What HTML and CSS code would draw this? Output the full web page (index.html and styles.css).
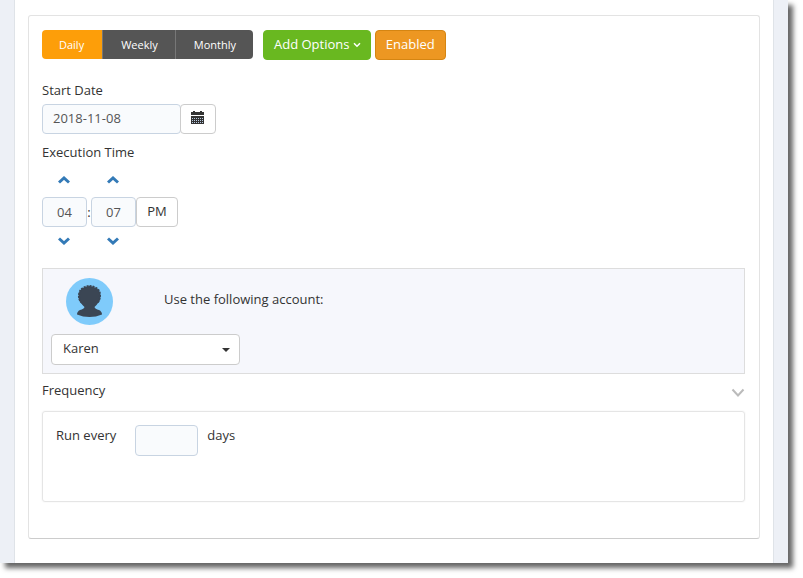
FILE: index.html
```html
<!DOCTYPE html>
<html lang="en">
<head>
    <meta charset="UTF-8">
    <meta name="viewport" content="width=device-width, initial-scale=1.0">
    <title>Schedule</title>
    <link rel="stylesheet" href="styles.css">
</head>
<body>

    <div class="window">
        <div class="page">
            <form class="card">
                <div class="toolbar">
                    <div class="btn-group">
                        <button type="button" class="active">Daily</button>
                        <button type="button">Weekly</button>
                        <button type="button">Monthly</button>
                    </div>
                    <button type="button" class="btn btn-green">Add Options
                        <svg width="8" height="6" viewBox="0 0 8 6"><path d="M1 1.2L4 4.2L7 1.2" fill="none" stroke="#fff" stroke-width="1.5"/></svg>
                    </button>
                    <button type="button" class="btn btn-orange">Enabled</button>
                </div>

                <label class="title" for="startDate">Start Date</label>
                <div class="date-row">
                    <input type="text" id="startDate" class="field date" value="2018-11-08">
                    <button type="button" class="btn btn-white calendar" aria-label="Open calendar">
                        <svg width="13" height="13" viewBox="0 0 13 13">
                            <path d="M0 1h2V0h2v1h5V0h2v1h2v3H0zM0 5h13v8H0z" fill="#333"/>
                            <path d="M1 7.500h11M1 9.500h11M1 11.500h11" stroke="#b9cbe0" stroke-dasharray="1 1"/>
                        </svg>
                    </button>
                </div>

                <label class="title" for="hours">Execution Time</label>
                <div class="time">
                    <button type="button" class="step" aria-label="Hour up"><svg width="12" height="8" viewBox="0 0 12 8"><path d="M1 6.5L6 2L11 6.5"/></svg></button>
                    <span></span>
                    <button type="button" class="step" aria-label="Minute up"><svg width="12" height="8" viewBox="0 0 12 8"><path d="M1 6.5L6 2L11 6.5"/></svg></button>
                    <span></span>
                    <input type="text" id="hours" class="field" value="04">
                    <span class="colon">:</span>
                    <input type="text" class="field" value="07" aria-label="Minutes">
                    <button type="button" class="btn btn-white">PM</button>
                    <button type="button" class="step" aria-label="Hour down"><svg width="12" height="8" viewBox="0 0 12 8"><path d="M1 1.5L6 6L11 1.5"/></svg></button>
                    <span></span>
                    <button type="button" class="step" aria-label="Minute down"><svg width="12" height="8" viewBox="0 0 12 8"><path d="M1 1.5L6 6L11 1.5"/></svg></button>
                    <span></span>
                </div>

                <div class="account">
                    <div class="account-head">
                        <svg width="47" height="47" viewBox="0 0 47 47">
                            <circle cx="23.5" cy="23.5" r="23.5" fill="#7fcbfb"/>
                            <path d="M18 9.500Q23.500 6.500 29 9.500Q34.500 11.500 34.500 18Q34.500 23 32 25Q30.500 27.500 28.500 29Q29 31 33 32Q36 33.500 36 36.500Q30 39 23.500 39T11 36.500Q11 33.500 14 32Q18 31 18.500 29Q16.500 27.500 15 25Q12.500 23 12.500 18Q12.500 11.500 18 9.500Z" fill="#3b4654"/>
                            <path d="M16 25Q12.500 22 13 16.500Q14 11 18 9.500Q23.500 6.500 29 9.500Q34 11.500 34 17Q34 22 31 25" fill="none" stroke="#3b4654" stroke-width="2" stroke-dasharray="2 1"/>
                        </svg>
                        <label for="account">Use the following account:</label>
                    </div>
                    <div class="select">
                        <select id="account">
                            <option>Karen</option>
                        </select>
                    </div>
                </div>

                <div class="frequency-head">
                    <span>Frequency</span>
                    <button type="button" class="toggle" aria-label="Toggle frequency"><svg width="14" height="10" viewBox="0 0 14 10"><path d="M1.500 1.500L7 7.500L12.500 1.500"/></svg></button>
                </div>
                <div class="frequency">
                    <label for="days">Run every</label>
                    <input type="text" id="days" class="field">
                    <span>days</span>
                </div>
            </form>
        </div>
    </div>

</body>
</html>
```
FILE: styles.css
```css
* {
    box-sizing: border-box;
}
body {
    margin: 0;
    padding: 0 15px 15px 0;
    background-color: white;
    font-family: "Open Sans", Arial, sans-serif;
    font-size: 13px;
    line-height: 20px;
    color: #333;
}
button, input, select {
    font-family: inherit;
    font-size: 13px;
    line-height: 20px;
    color: inherit;
    margin: 0;
}
button {
    cursor: pointer;
}
.window {
    padding: 0 14px;
    background-color: #edf0f6;
    box-shadow: 5px 5px 5px #666;
}
.page {
    padding: 15px 13px 24px;
    background-color: white;
    border-left: 1px solid #dfe3e8;
    border-right: 1px solid #dfe3e8;
}
.card {
    padding: 14px 14px 36px 13px;
    border: 1px solid #e3e3e3;
    border-bottom-color: #ccc;
    border-radius: 3px;
}
.toolbar {
    display: flex;
    align-items: flex-start;
    gap: 4px;
    margin-bottom: 20px;
}
.btn-group {
    display: flex;
    margin-right: 6px;
    border-radius: 4px;
    overflow: hidden;
}
.btn-group button {
    height: 29px;
    padding: 0 17px 0 18px;
    border: none;
    border-left: 1px solid #777;
    background-color: #555;
    color: white;
    font-size: 11px;
}
.btn-group .active {
    padding: 0 18px 0 17px;
    border-left: none;
    background-color: #fd9e09;
}
.btn {
    height: 30px;
    padding: 0 10px 2px;
    border: 1px solid;
    border-radius: 4px;
}
.btn-green {
    padding: 0 9px 2px 10px;
    background-color: #69b820;
    border-color: #69b820;
    color: white;
}
.btn-green svg {
    vertical-align: 1px;
}
.btn-orange {
    background-color: #ed9722;
    border-color: #d58512;
    color: white;
}
.btn-white {
    background-color: white;
    border-color: #ccc;
}
.title {
    display: block;
    margin-bottom: 4px;
}
.field {
    height: 30px;
    padding: 0 10px;
    border: 1px solid #c8d4e2;
    border-radius: 4px;
    background-color: #f9fbfd;
    color: #555;
}
.date-row {
    display: flex;
    margin-bottom: 8px;
}
.date {
    width: 139px;
    padding-bottom: 2px;
}
.calendar {
    width: 36px;
    padding: 0 2px 2px 0;
    margin-left: -1px;
}
.calendar svg {
    vertical-align: -1px;
}
.time {
    display: grid;
    grid-template-columns: 45px 4px 45px 42px;
    grid-template-rows: 31px 30px 28px;
    margin-bottom: 13px;
}
.time .field {
    width: 45px;
    text-align: center;
}
.time .btn {
    padding: 0 0 2px;
}
.colon {
    padding-top: 5px;
    text-align: center;
}
.step {
    height: 28px;
    padding: 0 1px 0 0;
    border: none;
    background: none;
}
.step svg {
    display: block;
    margin: 0 auto;
}
.step path {
    fill: none;
    stroke: #337ab7;
    stroke-width: 3;
}
.account {
    padding: 9px 8px 8px;
    border: 1px solid #ddd;
    background-color: #f6f7fc;
}
.account-head {
    display: flex;
    gap: 51px;
    padding-left: 15px;
    margin-bottom: 9px;
}
.account-head label {
    margin-top: 11px;
}
.select {
    position: relative;
    width: 189px;
}
.select select {
    display: block;
    width: 100%;
    height: 31px;
    padding: 0 11px 3px;
    appearance: none;
    border: 1px solid #ccc;
    border-radius: 4px;
    background-color: white;
}
.select::after {
    content: "";
    position: absolute;
    right: 10px;
    top: 14px;
    border: 4px solid transparent;
    border-top-color: #333;
    border-bottom: none;
    pointer-events: none;
}
.frequency-head {
    display: flex;
    justify-content: space-between;
    align-items: center;
    margin: 6px 0 11px;
}
.toggle {
    height: 20px;
    padding: 3px 0 0;
    border: none;
    background: none;
}
.toggle path {
    fill: none;
    stroke: #bbb;
    stroke-width: 2;
}
.frequency {
    display: flex;
    align-items: flex-start;
    min-height: 91px;
    padding: 13px;
    border: 1px solid #e5e5e5;
    border-radius: 3px;
    box-shadow: 0 0 2px #eee;
}
.frequency .field {
    width: 63px;
    height: 31px;
    margin: 0 9px 0 19px;
}
```
